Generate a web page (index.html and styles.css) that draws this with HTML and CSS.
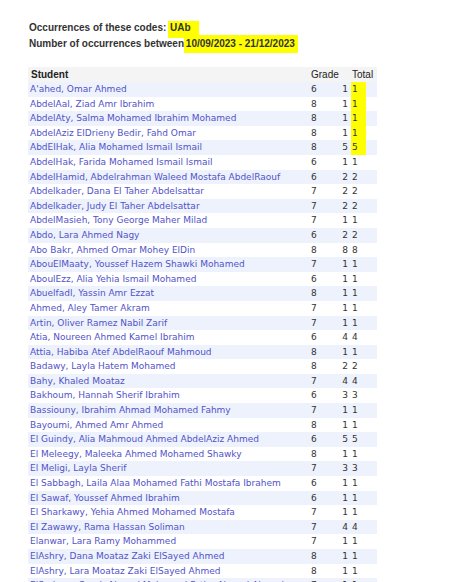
FILE: index.html
```html
<!DOCTYPE html>
<html>
<head>
<meta charset="utf-8">
<link rel="stylesheet" href="styles.css">
</head>
<body>
<div class="page">
  <div class="summary">
    <div class="line">Occurrences of these codes: <span class="mark mark-code">UAb</span></div>
    <div class="line">Number of occurrences between <span class="mark mark-date">10/09/2023 - 21/12/2023</span></div>
  </div>
  <table class="report">
    <colgroup><col class="c-student"><col class="c-grade"><col class="c-count"><col class="c-total"></colgroup>
    <thead>
      <tr><th class="h-student">Student</th><th class="h-grade" colspan="2">Grade</th><th class="h-total">Total</th></tr>
    </thead>
    <tbody>
      <tr><td class="name"><a>A'ahed, Omar Ahmed</a></td><td class="grade">6</td><td class="count">1</td><td class="total"><span class="hl">1</span></td></tr>
      <tr><td class="name"><a>AbdelAal, Ziad Amr Ibrahim</a></td><td class="grade">8</td><td class="count">1</td><td class="total"><span class="hl">1</span></td></tr>
      <tr><td class="name"><a>AbdelAty, Salma Mohamed Ibrahim Mohamed</a></td><td class="grade">8</td><td class="count">1</td><td class="total"><span class="hl">1</span></td></tr>
      <tr><td class="name"><a>AbdelAziz ElDrieny Bedir, Fahd Omar</a></td><td class="grade">8</td><td class="count">1</td><td class="total"><span class="hl">1</span></td></tr>
      <tr><td class="name"><a>AbdElHak, Alia Mohamed Ismail Ismail</a></td><td class="grade">8</td><td class="count">5</td><td class="total"><span class="hl">5</span></td></tr>
      <tr><td class="name"><a>AbdelHak, Farida Mohamed Ismail Ismail</a></td><td class="grade">6</td><td class="count">1</td><td class="total">1</td></tr>
      <tr><td class="name"><a>AbdelHamid, Abdelrahman Waleed Mostafa AbdelRaouf</a></td><td class="grade">6</td><td class="count">2</td><td class="total">2</td></tr>
      <tr><td class="name"><a>Abdelkader, Dana El Taher Abdelsattar</a></td><td class="grade">7</td><td class="count">2</td><td class="total">2</td></tr>
      <tr><td class="name"><a>Abdelkader, Judy El Taher Abdelsattar</a></td><td class="grade">7</td><td class="count">2</td><td class="total">2</td></tr>
      <tr><td class="name"><a>AbdelMasieh, Tony George Maher Milad</a></td><td class="grade">7</td><td class="count">1</td><td class="total">1</td></tr>
      <tr><td class="name"><a>Abdo, Lara Ahmed Nagy</a></td><td class="grade">6</td><td class="count">2</td><td class="total">2</td></tr>
      <tr><td class="name"><a>Abo Bakr, Ahmed Omar Mohey ElDin</a></td><td class="grade">8</td><td class="count">8</td><td class="total">8</td></tr>
      <tr><td class="name"><a>AbouElMaaty, Youssef Hazem Shawki Mohamed</a></td><td class="grade">7</td><td class="count">1</td><td class="total">1</td></tr>
      <tr><td class="name"><a>AboulEzz, Alia Yehia Ismail Mohamed</a></td><td class="grade">6</td><td class="count">1</td><td class="total">1</td></tr>
      <tr><td class="name"><a>Abuelfadl, Yassin Amr Ezzat</a></td><td class="grade">8</td><td class="count">1</td><td class="total">1</td></tr>
      <tr><td class="name"><a>Ahmed, Aley Tamer Akram</a></td><td class="grade">7</td><td class="count">1</td><td class="total">1</td></tr>
      <tr><td class="name"><a>Artin, Oliver Ramez Nabil Zarif</a></td><td class="grade">7</td><td class="count">1</td><td class="total">1</td></tr>
      <tr><td class="name"><a>Atia, Noureen Ahmed Kamel Ibrahim</a></td><td class="grade">6</td><td class="count">4</td><td class="total">4</td></tr>
      <tr><td class="name"><a>Attia, Habiba Atef AbdelRaouf Mahmoud</a></td><td class="grade">8</td><td class="count">1</td><td class="total">1</td></tr>
      <tr><td class="name"><a>Badawy, Layla Hatem Mohamed</a></td><td class="grade">8</td><td class="count">2</td><td class="total">2</td></tr>
      <tr><td class="name"><a>Bahy, Khaled Moataz</a></td><td class="grade">7</td><td class="count">4</td><td class="total">4</td></tr>
      <tr><td class="name"><a>Bakhoum, Hannah Sherif Ibrahim</a></td><td class="grade">6</td><td class="count">3</td><td class="total">3</td></tr>
      <tr><td class="name"><a>Bassiouny, Ibrahim Ahmad Mohamed Fahmy</a></td><td class="grade">7</td><td class="count">1</td><td class="total">1</td></tr>
      <tr><td class="name"><a>Bayoumi, Ahmed Amr Ahmed</a></td><td class="grade">8</td><td class="count">1</td><td class="total">1</td></tr>
      <tr><td class="name"><a>El Guindy, Alia Mahmoud Ahmed AbdelAziz Ahmed</a></td><td class="grade">6</td><td class="count">5</td><td class="total">5</td></tr>
      <tr><td class="name"><a>El Meleegy, Maleeka Ahmed Mohamed Shawky</a></td><td class="grade">8</td><td class="count">1</td><td class="total">1</td></tr>
      <tr><td class="name"><a>El Meligi, Layla Sherif</a></td><td class="grade">7</td><td class="count">3</td><td class="total">3</td></tr>
      <tr><td class="name"><a>El Sabbagh, Laila Alaa Mohamed Fathi Mostafa Ibrahem</a></td><td class="grade">6</td><td class="count">1</td><td class="total">1</td></tr>
      <tr><td class="name"><a>El Sawaf, Youssef Ahmed Ibrahim</a></td><td class="grade">6</td><td class="count">1</td><td class="total">1</td></tr>
      <tr><td class="name"><a>El Sharkawy, Yehia Ahmed Mohamed Mostafa</a></td><td class="grade">7</td><td class="count">1</td><td class="total">1</td></tr>
      <tr><td class="name"><a>El Zawawy, Rama Hassan Soliman</a></td><td class="grade">7</td><td class="count">4</td><td class="total">4</td></tr>
      <tr><td class="name"><a>Elanwar, Lara Ramy Mohammed</a></td><td class="grade">7</td><td class="count">1</td><td class="total">1</td></tr>
      <tr><td class="name"><a>ElAshry, Dana Moataz Zaki ElSayed Ahmed</a></td><td class="grade">8</td><td class="count">1</td><td class="total">1</td></tr>
      <tr><td class="name"><a>ElAshry, Lara Moataz Zaki ElSayed Ahmed</a></td><td class="grade">8</td><td class="count">1</td><td class="total">1</td></tr>
      <tr><td class="name"><a>ElSadawy, Sarah Ahmed Mohamed Fathy Ahmed Ahmed</a></td><td class="grade">7</td><td class="count">1</td><td class="total">1</td></tr>
    </tbody>
  </table>
</div>
</body>
</html>
```

FILE: styles.css
```css
html, body {
  margin: 0;
  padding: 0;
  background: #ffffff;
}

.page {
  padding: 20px 0 0 28px;
}

.summary {
  font-family: "Liberation Sans", Arial, sans-serif;
  font-weight: bold;
  font-size: 10px;
  color: #333333;
  padding-left: 1px;
  margin-bottom: 17px;
}

.line {
  line-height: 16px;
  height: 15px;
}

.mark {
  background: #ffff00;
  display: inline-block;
}

.mark-code {
  padding: 1px 8px 4px 2px;
  margin-left: -1px;
  line-height: 12px;
}

.mark-date {
  padding: 3px 3px 3px 2px;
  margin-left: -3px;
  line-height: 12px;
}

.report {
  border-collapse: collapse;
  table-layout: fixed;
  width: 349px;
}

.c-student { width: 280px; }
.c-grade { width: 22px; }
.c-count { width: 19px; }
.c-total { width: 28px; }

.report th {
  background: #f4f4f4;
  font-family: "Liberation Sans", Arial, sans-serif;
  font-size: 10px;
  color: #222222;
  text-align: left;
  height: 14px;
  line-height: 14px;
  padding: 0;
  font-weight: normal;
  white-space: nowrap;
}

.report th.h-student {
  font-weight: bold;
  padding-left: 3px;
  padding-top: 1px;
}

.report th.h-grade {
  padding-left: 3px;
}

.report th.h-total {
  padding-left: 3px;
}

.report td {
  font-family: "DejaVu Sans", Verdana, sans-serif;
  font-size: 9px;
  height: 14.6px;
  line-height: 14.6px;
  padding: 0;
  color: #333333;
  white-space: nowrap;
  overflow: hidden;
}

.report tbody tr:nth-child(odd) td {
  background: #edf2fc;
}

.report td.name {
  padding-left: 2px;
}

.report td.name a {
  color: #5252c9;
  text-decoration: none;
}

.report td.grade {
  padding-left: 3px;
}

.report td.count {
  text-align: right;
  padding-right: 1px;
}

.report td.total {
  padding-left: 3px;
}

.hl {
  display: inline-block;
  background: #ffff00;
  margin-left: -1px;
  padding: 0 8px 0 1px;
  line-height: 14.6px;
}
```
